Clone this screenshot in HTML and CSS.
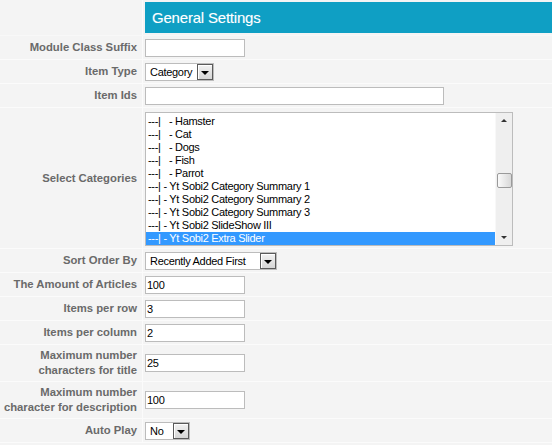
FILE: index.html
```html
<!DOCTYPE html>
<html>
<head>
<meta charset="utf-8">
<link rel="stylesheet" href="styles.css">
</head>
<body>
<div class="form">
  <div class="row row-head">
    <div class="label"></div>
    <div class="ctrl"><div class="header">General Settings</div></div>
  </div>
  <div class="row">
    <div class="label">Module Class Suffix</div>
    <div class="ctrl"><input class="text w99" type="text" value=""></div>
  </div>
  <div class="row">
    <div class="label">Item Type</div>
    <div class="ctrl"><div class="select w68"><span class="val">Category</span><span class="btn"></span></div></div>
  </div>
  <div class="row">
    <div class="label">Item Ids</div>
    <div class="ctrl"><input class="text w299" type="text" value=""></div>
  </div>
  <div class="row row-list">
    <div class="label">Select Categories</div>
    <div class="ctrl">
      <div class="listbox">
        <div class="options">
          <div class="opt">---|   - Hamster</div>
          <div class="opt">---|   - Cat</div>
          <div class="opt">---|   - Dogs</div>
          <div class="opt">---|   - Fish</div>
          <div class="opt">---|   - Parrot</div>
          <div class="opt">---| - Yt Sobi2 Category Summary 1</div>
          <div class="opt">---| - Yt Sobi2 Category Summary 2</div>
          <div class="opt">---| - Yt Sobi2 Category Summary 3</div>
          <div class="opt">---| - Yt Sobi2 SlideShow III</div>
          <div class="opt sel">---| - Yt Sobi2 Extra Slider</div>
        </div>
        <div class="scroll">
          <div class="arrow up"></div>
          <div class="track"><div class="thumb"></div></div>
          <div class="arrow down"></div>
        </div>
      </div>
    </div>
  </div>
  <div class="row">
    <div class="label">Sort Order By</div>
    <div class="ctrl"><div class="select w132"><span class="val">Recently Added First</span><span class="btn"></span></div></div>
  </div>
  <div class="row">
    <div class="label">The Amount of Articles</div>
    <div class="ctrl"><input class="text w99" type="text" value="100"></div>
  </div>
  <div class="row">
    <div class="label">Items per row</div>
    <div class="ctrl"><input class="text w99" type="text" value="3"></div>
  </div>
  <div class="row">
    <div class="label">Items per column</div>
    <div class="ctrl"><input class="text w99" type="text" value="2"></div>
  </div>
  <div class="row row-tall">
    <div class="label">Maximum number<br>characters for title</div>
    <div class="ctrl"><input class="text w99" type="text" value="25"></div>
  </div>
  <div class="row row-tall">
    <div class="label">Maximum number<br>character for description</div>
    <div class="ctrl"><input class="text w99" type="text" value="100"></div>
  </div>
  <div class="row">
    <div class="label">Auto Play</div>
    <div class="ctrl"><div class="select w45"><span class="val">No</span><span class="btn"></span></div></div>
  </div>
</div>
</body>
</html>
```

FILE: styles.css
```css
html, body {
  margin: 0;
  padding: 0;
  background: #f4f4f4;
}
body {
  font-family: "Liberation Sans", Arial, sans-serif;
  width: 552px;
  height: 445px;
  overflow: hidden;
}
.form {
  display: flex;
  flex-direction: column;
}
.row {
  display: grid;
  grid-template-columns: 143px 1fr;
  height: 23px;
  border-bottom: 1px solid #fbfbfb;
}
.row-head {
  height: 35px;
  border-bottom: 1px solid #f8f8f8;
}
.row-list {
  height: 140px;
}
.row-tall {
  height: 36px;
}
.label {
  border-right: 1px solid #fbfbfb;
  padding-right: 5px;
  display: flex;
  align-items: center;
  justify-content: flex-end;
  text-align: right;
  white-space: nowrap;
  font-weight: bold;
  font-size: 11.3px;
  line-height: 15px;
  color: #6a6a6a;
}
.ctrl {
  padding-left: 2px;
  display: flex;
  align-items: center;
}
.row-head .ctrl {
  align-items: flex-start;
  padding-top: 2px;
}
.header {
  flex: 1;
  height: 31px;
  background: #0f9fc4;
  color: #fff;
  font-size: 15px;
  letter-spacing: -0.2px;
  line-height: 31px;
  padding-left: 7px;
  text-shadow: 0 0 1px rgba(255,255,255,0.3);
}
.text {
  box-sizing: border-box;
  height: 18px;
  margin: 0;
  border: 1px solid #bcbcbc;
  background: #fff;
  padding: 0 1px;
  font-family: "Liberation Sans", Arial, sans-serif;
  font-size: 11px;
  letter-spacing: -0.3px;
  color: #000;
  outline: none;
}
.w99 { width: 100px; }
.w299 { width: 299px; }
.select {
  box-sizing: border-box;
  height: 18px;
  border: 1px solid #bcbcbc;
  background: #fff;
  display: flex;
  align-items: center;
  justify-content: space-between;
  font-size: 11px;
  letter-spacing: -0.3px;
  color: #000;
  padding-left: 4px;
}
.w68 { width: 69px; }
.w132 { width: 132px; }
.w45 { width: 45px; }
.val {
  white-space: nowrap;
}
.btn {
  box-sizing: border-box;
  width: 16px;
  height: 16px;
  border: 1px solid #5a5a5a;
  background: linear-gradient(#f2f2f2, #d6d6d6);
  box-shadow: inset 1px 1px 0 #fff;
  position: relative;
}
.btn::after {
  content: "";
  position: absolute;
  left: 3px;
  top: 6px;
  border-left: 4px solid transparent;
  border-right: 4px solid transparent;
  border-top: 4px solid #000;
}
.listbox {
  box-sizing: border-box;
  width: 368px;
  height: 134px;
  border: 1px solid #bcbcbc;
  background: #fff;
  display: flex;
  margin-top: 2px;
}
.options {
  flex: 1;
  padding-top: 2px;
  overflow: hidden;
}
.opt {
  height: 13px;
  line-height: 13px;
  font-size: 11px;
  letter-spacing: -0.3px;
  padding-left: 2px;
  white-space: pre;
  color: #000;
}
.opt.sel {
  background: #3399ff;
  color: #fff;
}
.scroll {
  width: 16px;
  background: #efefef;
  border-left: 1px solid #f8f8f8;
  display: flex;
  flex-direction: column;
}
.arrow {
  height: 16px;
  position: relative;
}
.arrow::after {
  content: "";
  position: absolute;
  left: 5px;
  border-left: 3px solid transparent;
  border-right: 3px solid transparent;
}
.arrow.up::after {
  top: 6px;
  border-bottom: 3px solid #333;
}
.arrow.down::after {
  top: 7px;
  border-top: 3px solid #333;
}
.track {
  flex: 1;
  position: relative;
}
.thumb {
  position: absolute;
  left: 1px;
  right: 0;
  top: 44px;
  height: 15px;
  box-sizing: border-box;
  border: 1px solid #9a9a9a;
  border-radius: 2px;
  background: linear-gradient(90deg, #fafafa, #d8d8d8);
}
```
